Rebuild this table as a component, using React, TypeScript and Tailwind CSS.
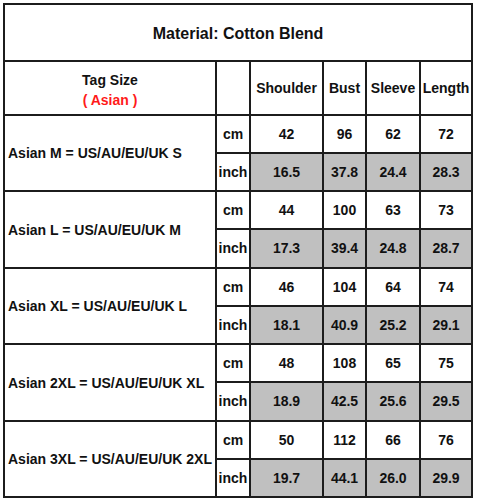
import { Fragment } from "react";

const rows = [
  { tag: "Asian M = US/AU/EU/UK S", cm: ["42", "96", "62", "72"], inch: ["16.5", "37.8", "24.4", "28.3"], h: ["h-[38px]", "h-[38px]"] },
  { tag: "Asian L = US/AU/EU/UK M", cm: ["44", "100", "63", "73"], inch: ["17.3", "39.4", "24.8", "28.7"], h: ["h-[38px]", "h-[39px]"] },
  { tag: "Asian XL = US/AU/EU/UK L", cm: ["46", "104", "64", "74"], inch: ["18.1", "40.9", "25.2", "29.1"], h: ["h-[38px]", "h-[38px]"] },
  { tag: "Asian 2XL = US/AU/EU/UK XL", cm: ["48", "108", "65", "75"], inch: ["18.9", "42.5", "25.6", "29.5"], h: ["h-[38px]", "h-[39px]"] },
  { tag: "Asian 3XL = US/AU/EU/UK 2XL", cm: ["50", "112", "66", "76"], inch: ["19.7", "44.1", "26.0", "29.9"], h: ["h-[38px]", "h-[38px]"] },
];

const cell = "border-2 border-[#1c1c1c] text-center align-middle p-0";

export default function App() {
  return (
    <div className="w-[477px] h-[500px] bg-white pt-[3px] pl-[3px] font-['Liberation_Sans',Arial,sans-serif] font-bold text-[14px] text-[#111]">
      <table className="w-[470px] table-fixed border-collapse">
        <colgroup>
          <col className="w-[212px]" />
          <col className="w-[34px]" />
          <col className="w-[73px]" />
          <col className="w-[43px]" />
          <col className="w-[54px]" />
          <col className="w-[52px]" />
        </colgroup>
        <tbody>
          <tr className="h-[57px]">
            <td colSpan={6} className={`${cell} text-[16px] pt-[2px]`}>
              Material: Cotton Blend
            </td>
          </tr>
          <tr className="h-[54px]">
            <td className={`${cell} leading-[20px] pt-[3px]`}>
              <div>Tag Size</div>
              <div className="text-[#ff1a1a]">( Asian )</div>
            </td>
            <td className={cell}></td>
            <td className={cell}>Shoulder</td>
            <td className={cell}>Bust</td>
            <td className={cell}>Sleeve</td>
            <td className={cell}>Length</td>
          </tr>
          {rows.map((r) => (
            <Fragment key={r.tag}>
              <tr className={r.h[0]}>
                <td rowSpan={2} className={`${cell} text-left pl-[3px] pt-[1px] whitespace-nowrap`}>
                  {r.tag}
                </td>
                <td className={cell}>cm</td>
                {r.cm.map((v, i) => (
                  <td key={i} className={cell}>
                    {v}
                  </td>
                ))}
              </tr>
              <tr className={r.h[1]}>
                <td className={cell}>inch</td>
                {r.inch.map((v, i) => (
                  <td key={i} className={`${cell} bg-[#c0c0c0]`}>
                    {v}
                  </td>
                ))}
              </tr>
            </Fragment>
          ))}
        </tbody>
      </table>
    </div>
  );
}
